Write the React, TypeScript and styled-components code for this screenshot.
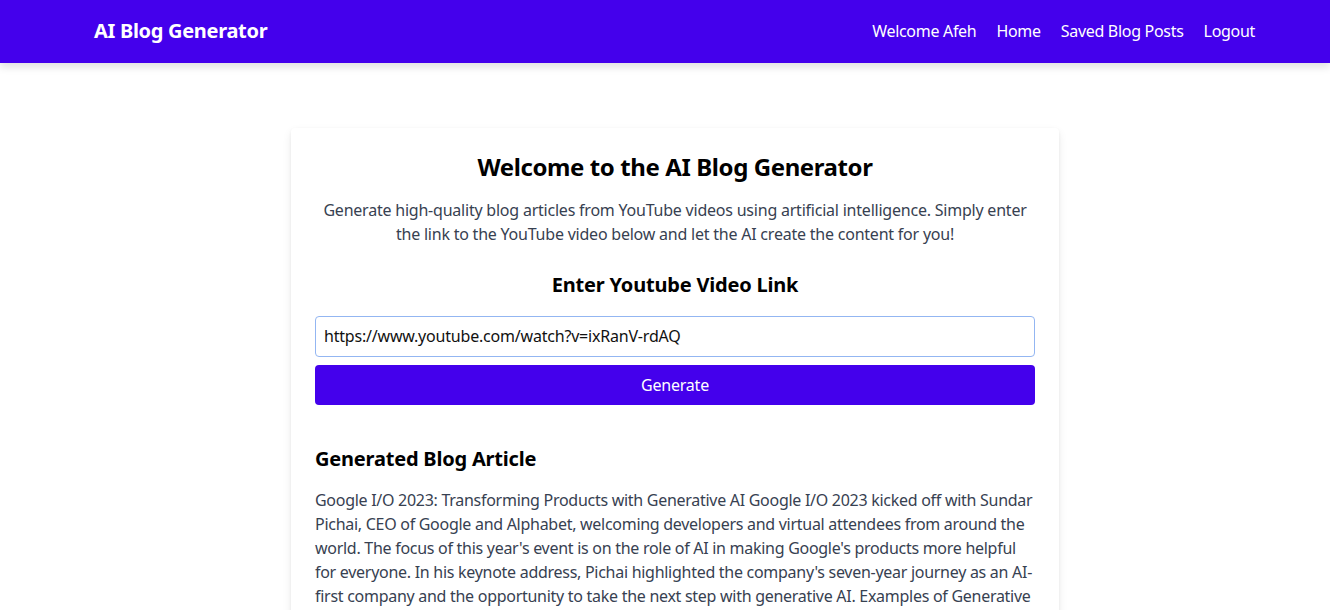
import React from "react";
import styled, { createGlobalStyle } from "styled-components";

const Global = createGlobalStyle`
  * { box-sizing: border-box; }
  html, body { margin: 0; padding: 0; background: #ffffff; }
  body { font-family: "Noto Sans", "Open Sans", sans-serif; color: #000; }
`;

const Page = styled.div`
  min-height: 610px;
  background: #ffffff;
`;

const Header = styled.header`
  height: 63px;
  background: #4400ec;
  display: flex;
  align-items: center;
  justify-content: space-between;
  padding: 0 75px 2px 94px;
  box-shadow: 0 4px 8px rgba(0, 0, 0, 0.12);
  position: relative;
`;

const Logo = styled.h1`
  margin: 0;
  color: #fff;
  font-size: 20px;
  font-weight: 700;
  letter-spacing: -0.3px;
`;

const Nav = styled.nav`
  display: flex;
  gap: 20px;
`;

const NavLink = styled.a`
  color: #fff;
  font-size: 16px;
  text-decoration: none;
  letter-spacing: -0.3px;
`;

const Main = styled.main`
  display: flex;
  justify-content: center;
  padding: 65px 0 0 20px;
`;

const Card = styled.section`
  width: 768px;
  background: #fff;
  padding: 24px;
  border-radius: 4px;
  box-shadow: 0 4px 10px rgba(0, 0, 0, 0.08), 0 1px 3px rgba(0, 0, 0, 0.06);
  min-height: 560px;
`;

const Title = styled.h2`
  margin: 0;
  text-align: center;
  font-size: 24px;
  line-height: 30px;
  font-weight: 700;
  letter-spacing: -0.4px;
`;

const Intro = styled.p`
  margin: 16px 0 0;
  text-align: center;
  font-size: 16px;
  line-height: 24px;
  color: #374151;
  letter-spacing: -0.22px;
  white-space: nowrap;
`;

const SubTitle = styled.h3<{ $align?: string; $top: number }>`
  margin: ${(p) => p.$top}px 0 0;
  text-align: ${(p) => p.$align || "center"};
  font-size: 20px;
  line-height: 28px;
  font-weight: 700;
  letter-spacing: -0.2px;
`;

const Form = styled.div`
  margin-top: 17px;
  display: flex;
  flex-direction: column;
  gap: 8px;
`;

const Input = styled.input`
  height: 41px;
  width: 100%;
  border: 1px solid #93b6f2;
  border-radius: 4px;
  padding: 0 0 2px 8px;
  font-family: inherit;
  font-size: 16px;
  color: #111;
  letter-spacing: -0.2px;
  outline: none;
`;

const Button = styled.button`
  height: 40px;
  width: 100%;
  border: none;
  border-radius: 4px;
  background: #4400ec;
  color: #fff;
  font-family: inherit;
  font-size: 16px;
  letter-spacing: -0.2px;
  padding-bottom: 1px;
`;

const Article = styled.p`
  margin: 15px 0 0;
  font-size: 16px;
  line-height: 24px;
  color: #374151;
  letter-spacing: -0.28px;
  white-space: nowrap;
`;

const introLines = [
  "Generate high-quality blog articles from YouTube videos using artificial intelligence. Simply enter",
  "the link to the YouTube video below and let the AI create the content for you!",
];

const articleLines = [
  "Google I/O 2023: Transforming Products with Generative AI Google I/O 2023 kicked off with Sundar",
  "Pichai, CEO of Google and Alphabet, welcoming developers and virtual attendees from around the",
  "world. The focus of this year's event is on the role of AI in making Google's products more helpful",
  "for everyone. In his keynote address, Pichai highlighted the company's seven-year journey as an AI-",
  "first company and the opportunity to take the next step with generative AI. Examples of Generative",
];

const withBreaks = (lines: string[]) =>
  lines.map((l, i) => (
    <React.Fragment key={i}>
      {l}
      {i < lines.length - 1 && <br />}
    </React.Fragment>
  ));

export default function App() {
  return (
    <Page>
      <Global />
      <Header>
        <Logo>AI Blog Generator</Logo>
        <Nav>
          <NavLink href="#">Welcome Afeh</NavLink>
          <NavLink href="#">Home</NavLink>
          <NavLink href="#">Saved Blog Posts</NavLink>
          <NavLink href="#">Logout</NavLink>
        </Nav>
      </Header>
      <Main>
        <Card>
          <Title>Welcome to the AI Blog Generator</Title>
          <Intro>{withBreaks(introLines)}</Intro>
          <SubTitle $top={25}>Enter Youtube Video Link</SubTitle>
          <Form>
            <Input defaultValue="https://www.youtube.com/watch?v=ixRanV-rdAQ" />
            <Button>Generate</Button>
          </Form>
          <SubTitle $align="left" $top={40}>Generated Blog Article</SubTitle>
          <Article>{withBreaks(articleLines)}</Article>
        </Card>
      </Main>
    </Page>
  );
}
